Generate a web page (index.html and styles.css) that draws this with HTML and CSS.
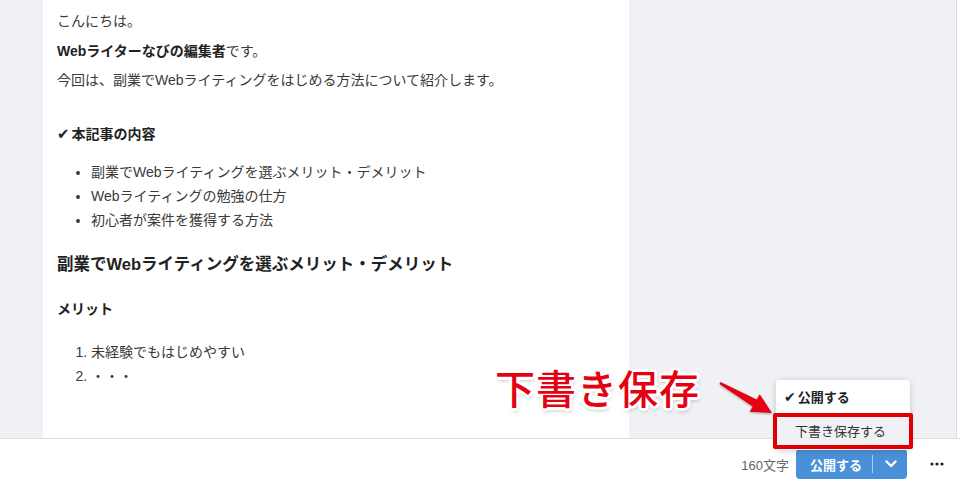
FILE: index.html
```html
<!DOCTYPE html>
<html lang="ja">

<head>
    <meta charset="UTF-8">
    <meta name="viewport" content="width=device-width, initial-scale=1.0">
    <title>Editor</title>
    <link rel="stylesheet" href="styles.css">
</head>

<body>

    <div class="workspace">
        <div class="gutter"></div>

        <article class="article">
            <p>こんにちは。</p>
            <p><strong>Webライターなびの編集者</strong>です。</p>
            <p>今回は、副業でWebライティングをはじめる方法について紹介します。</p>

            <h3 class="toc-title"><span class="check">✔</span>本記事の内容</h3>
            <ul class="list">
                <li>副業でWebライティングを選ぶメリット・デメリット</li>
                <li>Webライティングの勉強の仕方</li>
                <li>初心者が案件を獲得する方法</li>
            </ul>

            <h2 class="section-title">副業でWebライティングを選ぶメリット・デメリット</h2>
            <h3 class="sub-title">メリット</h3>
            <ol class="list">
                <li>未経験でもはじめやすい</li>
                <li>・・・</li>
            </ol>
        </article>

        <div class="side"></div>
    </div>

    <footer class="bottom-bar">
        <span class="count">160文字</span>
        <div class="publish-btn">
            <span class="publish-label">公開する</span>
            <span class="publish-divider"></span>
            <svg class="chevron" width="12" height="8" viewBox="0 0 12 8">
                <path d="M1.5 1.5 L6 6 L10.5 1.5" fill="none" stroke="#fff" stroke-width="2.4" stroke-linecap="round" stroke-linejoin="round" />
            </svg>
        </div>
        <svg class="more" width="14" height="4" viewBox="0 0 14 4">
            <circle cx="2" cy="2" r="1.6" fill="#222" />
            <circle cx="7" cy="2" r="1.6" fill="#222" />
            <circle cx="12" cy="2" r="1.6" fill="#222" />
        </svg>
    </footer>

    <!-- annotation overlay -->
    <div class="callout">下書き保存</div>
    <svg class="arrow" width="66" height="46" viewBox="0 0 66 46">
        <defs>
            <filter id="soft" x="-20%" y="-20%" width="140%" height="140%">
                <feDropShadow dx="0" dy="1" stdDeviation="1" flood-color="#000" flood-opacity="0.35" />
            </filter>
        </defs>
        <polygon points="5.5,7.1 41.7,24.5 44.7,19.3 57,38 34.7,36.7 37.7,31.5 4.5,8.9" fill="#e50012" filter="url(#soft)" />
    </svg>

    <div class="menu">
        <div class="menu-item menu-item-active"><span class="menu-check">✔</span>公開する</div>
        <div class="menu-item menu-item-hover">下書き保存する</div>
    </div>
    <div class="highlight"></div>

</body>

</html>
```

FILE: styles.css
```css
body {
    font-family: 'Liberation Sans', 'Noto Sans CJK JP', sans-serif;
    margin: 0;
    padding: 0;
    width: 960px;
    height: 489px;
    overflow: hidden;
    background-color: #fff;
    color: #3a3a3a;
    position: relative;
}

.workspace {
    display: flex;
    height: 438px;
    border-bottom: 1px solid #dcdee3;
    overflow: hidden;
}

.gutter {
    width: 43px;
    flex-shrink: 0;
    background-color: #f0f1f5;
}

.article {
    width: 572px;
    flex-shrink: 0;
    padding: 9px 0 0 14px;
    background-color: #fff;
    font-size: 14px;
}

.side {
    flex: 1;
    background-color: #f0f1f5;
    border-right: 1px solid #d9dade;
    margin-right: 3px;
}

.article p {
    margin: 0 0 5.5px;
    line-height: 24px;
}

.article strong {
    color: #222;
    font-weight: 700;
}

.toc-title {
    margin: 30px 0 14px;
    font-size: 14px;
    line-height: 24px;
    font-weight: 700;
    color: #222;
}

.check {
    font-family: 'DejaVu Sans', sans-serif;
    font-size: 15px;
    margin-right: 2px;
}

.list {
    margin: 0;
    padding-left: 34px;
    line-height: 24px;
}

.section-title {
    margin: 19px 0 20px;
    font-size: 16.5px;
    line-height: 26px;
    font-weight: 700;
    color: #222;
}

.sub-title {
    margin: 0 0 19px;
    font-size: 14px;
    line-height: 24px;
    font-weight: 700;
    color: #222;
}

.bottom-bar {
    display: flex;
    align-items: center;
    justify-content: flex-end;
    height: 50px;
    padding-right: 16px;
}

.count {
    font-size: 13px;
    color: #666;
    margin-right: 7px;
}

.publish-btn {
    display: flex;
    align-items: center;
    width: 111px;
    height: 30px;
    box-sizing: border-box;
    padding: 0 0 0 14px;
    background-color: #4a90d9;
    border-radius: 4px;
    color: #fff;
}

.publish-label {
    font-size: 13px;
    font-weight: 700;
}

.publish-divider {
    width: 1px;
    height: 18px;
    margin: 0 12px 0 10px;
    background-color: rgba(255, 255, 255, 0.55);
}

.chevron {
    display: block;
}

.more {
    display: block;
    margin-left: 23px;
}

/* overlay: annotation */
.callout {
    position: absolute;
    left: 495px;
    top: 361px;
    font-size: 40px;
    line-height: 52px;
    color: #e50012;
    letter-spacing: 1px;
    font-family: 'Noto Sans CJK JP', sans-serif;
    font-weight: 500;
    text-shadow:
        2px 0 0 #fff, -2px 0 0 #fff, 0 2px 0 #fff, 0 -2px 0 #fff,
        2px 2px 0 #fff, -2px -2px 0 #fff, 2px -2px 0 #fff, -2px 2px 0 #fff,
        3px 0 0 #fff, -3px 0 0 #fff, 0 3px 0 #fff, 0 -3px 0 #fff,
        1px 3px 4px rgba(0, 0, 0, 0.35);
}

.arrow {
    position: absolute;
    left: 715px;
    top: 375px;
}

.menu {
    position: absolute;
    left: 776px;
    top: 380px;
    width: 134px;
    background-color: #fff;
    border-radius: 3px;
    box-shadow: 0 1px 6px rgba(0, 0, 0, 0.18);
    font-size: 13px;
}

.menu-item {
    height: 36px;
    line-height: 36px;
    padding-left: 19px;
    color: #333;
}

.menu-item-active {
    height: 34px;
    line-height: 34px;
    padding-left: 8px;
    font-weight: 700;
    color: #222;
}

.menu-check {
    font-family: 'DejaVu Sans', sans-serif;
    font-size: 14px;
    margin-right: 2px;
}

.menu-item-hover {
    background-color: #f0f1f5;
}

.highlight {
    position: absolute;
    left: 773px;
    top: 413px;
    width: 132px;
    height: 28px;
    border: 4px solid #e00000;
    border-radius: 2px;
}
```
